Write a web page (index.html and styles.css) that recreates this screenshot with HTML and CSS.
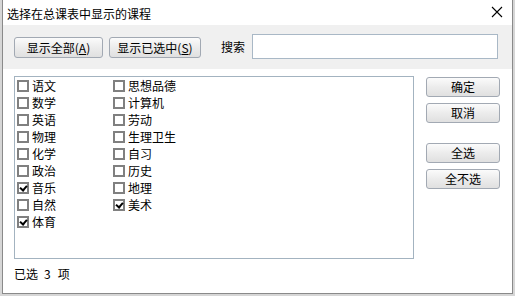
FILE: index.html
```html
<!DOCTYPE html>
<html lang="zh-CN">
<head>
    <meta charset="UTF-8">
    <title>选择在总课表中显示的课程</title>
    <link rel="stylesheet" href="styles.css">
</head>
<body>

    <div class="dialog">
        <div class="titlebar">
            <span class="title">选择在总课表中显示的课程</span>
            <span class="close">
                <svg width="12" height="12" viewBox="0 0 12 12">
                    <path d="M1 1 L11 11 M11 1 L1 11" stroke="#000" stroke-width="1.1" fill="none"/>
                </svg>
            </span>
        </div>

        <div class="toolbar">
            <button class="btn btn-wide">显示全部(<u>A</u>)</button>
            <button class="btn btn-wide2">显示已选中(<u>S</u>)</button>
            <label class="search-label" for="search">搜索</label>
            <input type="text" id="search" class="search">
        </div>

        <div class="content">
            <div class="listbox">
                <label class="item"><span class="box"></span>语文</label>
                <label class="item"><span class="box"></span>数学</label>
                <label class="item"><span class="box"></span>英语</label>
                <label class="item"><span class="box"></span>物理</label>
                <label class="item"><span class="box"></span>化学</label>
                <label class="item"><span class="box"></span>政治</label>
                <label class="item"><span class="box checked"></span>音乐</label>
                <label class="item"><span class="box"></span>自然</label>
                <label class="item"><span class="box checked"></span>体育</label>
                <label class="item"><span class="box"></span>思想品德</label>
                <label class="item"><span class="box"></span>计算机</label>
                <label class="item"><span class="box"></span>劳动</label>
                <label class="item"><span class="box"></span>生理卫生</label>
                <label class="item"><span class="box"></span>自习</label>
                <label class="item"><span class="box"></span>历史</label>
                <label class="item"><span class="box"></span>地理</label>
                <label class="item"><span class="box checked"></span>美术</label>
            </div>

            <div class="side">
                <button class="btn side-btn">确定</button>
                <button class="btn side-btn">取消</button>
                <button class="btn side-btn spaced">全选</button>
                <button class="btn side-btn">全不选</button>
            </div>
        </div>

        <div class="status">已选<span class="count">3</span>项</div>
    </div>

</body>
</html>
```

FILE: styles.css
```css
body {
    margin: 0;
    width: 515px;
    height: 296px;
    overflow: hidden;
    background-color: #d6d6d6;
    font-family: "Noto Sans CJK SC", "Noto Sans", sans-serif;
    font-size: 12px;
    color: #000;
}
.dialog {
    margin-left: 2px;
    width: 509px;
    height: 293px;
    background-color: #fff;
    border: 1px solid #8a8a8a;
    border-top: none;
    display: flex;
    flex-direction: column;
}
.titlebar {
    height: 25px;
    display: flex;
    align-items: center;
    justify-content: space-between;
    padding: 0 9px 0 4px;
}
.title {
    line-height: 14px;
    margin-top: 2px;
}
.close {
    display: flex;
    margin-top: -1px;
}
.toolbar {
    height: 44px;
    background-color: #f0f0f0;
    display: flex;
    align-items: flex-start;
    padding: 9px 13px 0 11px;
    box-sizing: border-box;
}
.btn {
    font-family: inherit;
    font-size: 12px;
    line-height: 14px;
    height: 21px;
    padding: 0;
    border: 1px solid #a2a9b3;
    border-radius: 3px;
    background: linear-gradient(#fbfbfb, #ececec 50%, #e0e0e0);
    color: #000;
    cursor: pointer;
}
.btn u {
    text-decoration: underline;
}
.toolbar .btn {
    margin-top: 3px;
}
.btn-wide {
    width: 89px;
}
.btn-wide2 {
    width: 92px;
    margin-left: 6px;
}
.search-label {
    margin-left: 20px;
    margin-top: 6px;
    line-height: 14px;
}
.search {
    margin-left: 7px;
    width: 246px;
    height: 25px;
    box-sizing: border-box;
    border: 1px solid #a9b8c6;
    background-color: #fff;
    padding: 2px 4px;
    font-family: inherit;
    font-size: 12px;
}
.content {
    display: flex;
    padding: 7px 12px 0 11px;
}
.listbox {
    width: 400px;
    height: 183px;
    box-sizing: border-box;
    border: 1px solid #a3b3c0;
    padding: 0 0 0 2px;
    display: grid;
    grid-auto-flow: column;
    grid-template-rows: repeat(9, 17px);
    grid-template-columns: 96px 96px;
    align-content: start;
}
.item {
    display: flex;
    align-items: center;
    line-height: 14px;
    white-space: nowrap;
}
.box {
    width: 12px;
    height: 12px;
    box-sizing: border-box;
    border: 2px solid #808080;
    background-color: #fff;
    margin-right: 3px;
    position: relative;
}
.box.checked::after {
    content: "";
    position: absolute;
    left: 2px;
    top: 0px;
    width: 3px;
    height: 5px;
    border-right: 2px solid #000;
    border-bottom: 2px solid #000;
    transform: rotate(40deg);
}
.side {
    margin-left: 12px;
    display: flex;
    flex-direction: column;
    gap: 6px;
    padding-top: 1px;
}
.side-btn {
    width: 74px;
    height: 20px;
}
.spaced {
    margin-top: 14px;
}
.status {
    padding: 8px 0 0 11px;
    line-height: 14px;
}
.count {
    margin: 0 7px 0 6px;
}
```
